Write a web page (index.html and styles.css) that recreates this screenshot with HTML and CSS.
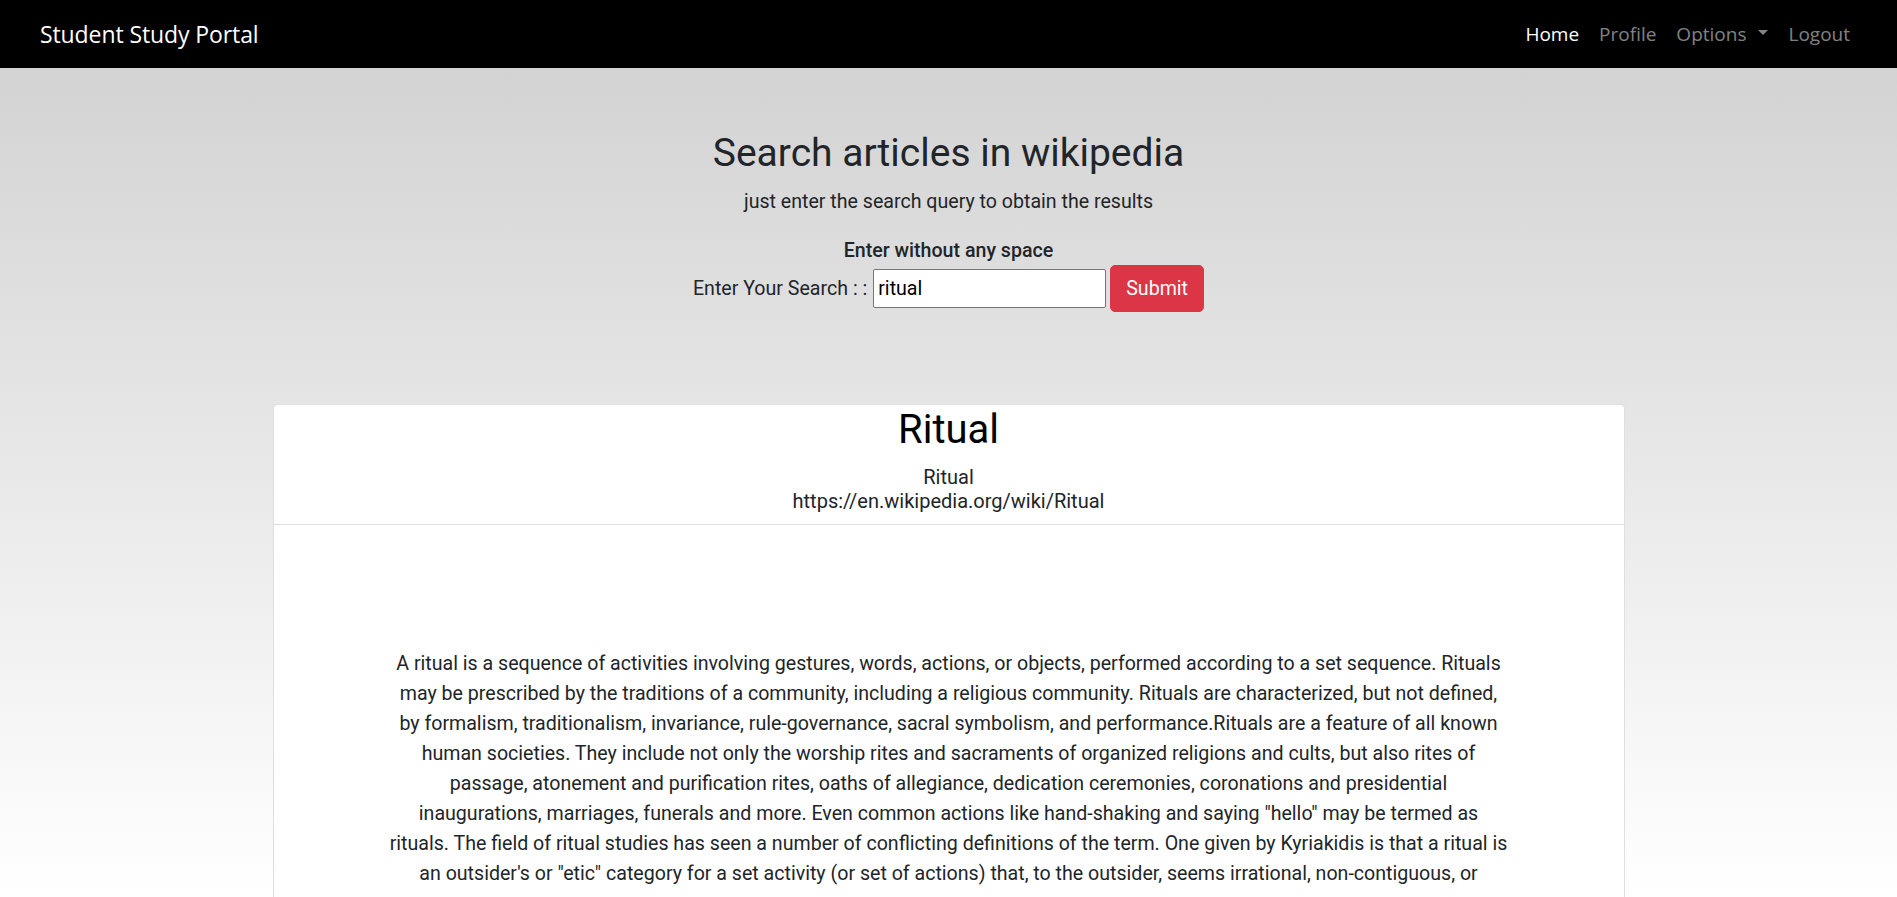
FILE: index.html
```html
<!DOCTYPE html>
<html lang="en">
<head>
<meta charset="utf-8">
<title>Student Study Portal</title>
<link rel="stylesheet" href="styles.css">
</head>
<body>
<nav class="navbar">
  <a class="brand" href="#">Student Study Portal</a>
  <ul class="nav-links">
    <li><a class="nav-link active" href="#">Home</a></li>
    <li><a class="nav-link" href="#">Profile</a></li>
    <li><a class="nav-link dropdown-toggle" href="#">Options<span class="caret"></span></a></li>
    <li><a class="nav-link" href="#">Logout</a></li>
  </ul>
</nav>

<main class="page">
  <section class="hero">
    <h1 class="hero-title">Search articles in wikipedia</h1>
    <p class="hero-sub">just enter the search query to obtain the results</p>
    <p class="hero-note">Enter without any space</p>
    <form class="search-form">
      <label class="search-label" for="q">Enter Your Search : :</label>
      <input class="search-input" id="q" type="text" value="ritual">
      <button class="btn-submit" type="button">Submit</button>
    </form>
  </section>

  <article class="card">
    <header class="card-header">
      <h2 class="card-title">Ritual</h2>
      <p class="card-meta"><span>Ritual</span><span>https://en.wikipedia.org/wiki/Ritual</span></p>
    </header>
    <div class="card-body">
      <p class="article-text">A ritual is a sequence of activities involving gestures, words, actions, or objects, performed according to a set sequence. Rituals<br>may be prescribed by the traditions of a community, including a religious community. Rituals are characterized, but not defined,<br>by formalism, traditionalism, invariance, rule-governance, sacral symbolism, and performance.Rituals are a feature of all known<br>human societies. They include not only the worship rites and sacraments of organized religions and cults, but also rites of<br>passage, atonement and purification rites, oaths of allegiance, dedication ceremonies, coronations and presidential<br>inaugurations, marriages, funerals and more. Even common actions like hand-shaking and saying "hello" may be termed as<br>rituals. The field of ritual studies has seen a number of conflicting definitions of the term. One given by Kyriakidis is that a ritual is<br>an outsider's or "etic" category for a set activity (or set of actions) that, to the outsider, seems irrational, non-contiguous, or</p>
    </div>
  </article>
</main>
</body>
</html>
```

FILE: styles.css
```css
* {
  box-sizing: border-box;
}

html, body {
  margin: 0;
  padding: 0;
}

body {
  font-family: Roboto, "Liberation Sans", sans-serif;
  font-size: 19.6px;
  line-height: 30px;
  color: #212529;
  background-color: #fff;
  background-image: linear-gradient(#d3d3d3, #ffffff);
  background-repeat: no-repeat;
  background-position: 0 68px;
  background-size: 100% 829px;
}

/* Navbar */
.navbar {
  height: 68px;
  background: #000;
  display: flex;
  align-items: center;
  justify-content: space-between;
  padding: 0 37px 0 40px;
  font-family: "Open Sans", "Liberation Sans", sans-serif;
}

.brand {
  color: #fff;
  text-decoration: none;
  font-size: 23px;
  line-height: 31px;
  letter-spacing: -0.1px;
}

.nav-links {
  list-style: none;
  margin: 0;
  padding: 0;
  display: flex;
  align-items: center;
}

.nav-link {
  display: block;
  padding: 0 10px;
  font-size: 19px;
  line-height: 26px;
  color: rgba(255, 255, 255, 0.52);
  text-decoration: none;
}

.nav-link.active {
  color: #fff;
}

.caret {
  display: inline-block;
  margin-left: 12px;
  vertical-align: 0.3em;
  border-top: 5px solid rgba(255, 255, 255, 0.52);
  border-left: 5px solid transparent;
  border-right: 5px solid transparent;
}

/* Hero */
.hero {
  padding-top: 62px;
  text-align: center;
}

.hero-title {
  margin: 0 0 10px;
  font-size: 39px;
  font-weight: 400;
  line-height: 1.2;
}

.hero-sub {
  margin: 0 0 20px;
}

.hero-note {
  margin: 0;
  font-weight: 500;
  line-height: 28px;
}

.search-form {
  display: flex;
  justify-content: center;
  align-items: baseline;
  gap: 4px;
}

.search-label {
  margin-right: 2px;
}

.search-input {
  width: 233px;
  height: 39px;
  border: 1px solid #767676;
  border-radius: 2px;
  padding: 1px 4px;
  font-family: Roboto, "Liberation Sans", sans-serif;
  font-size: 19.6px;
  color: #000;
  background: #fff;
}

.btn-submit {
  background: #dc3545;
  border: 1px solid #dc3545;
  color: #fff;
  border-radius: 5px;
  padding: 8px 15px 7px;
  font-family: Roboto, "Liberation Sans", sans-serif;
  font-size: 19.6px;
  line-height: 30px;
}

/* Card */
.card {
  width: 1352px;
  margin: 92px auto 0;
  background: #fff;
  border: 1px solid rgba(0, 0, 0, 0.125);
  border-radius: 5px;
}

.card-header {
  padding: 1px 20px 11px;
  border-bottom: 1px solid rgba(0, 0, 0, 0.125);
  text-align: center;
}

.card-title {
  margin: 0 0 11px;
  font-size: 40px;
  font-weight: 400;
  line-height: 1.2;
  color: #000;
}

.card-meta {
  margin: 0;
  font-size: 20px;
  line-height: 24px;
  color: #212529;
}

.card-meta span {
  display: block;
}

.card-body {
  padding: 124px 25px 25px;
}

.article-text {
  margin: 0;
  text-align: center;
  white-space: nowrap;
  line-height: 30px;
}
```
